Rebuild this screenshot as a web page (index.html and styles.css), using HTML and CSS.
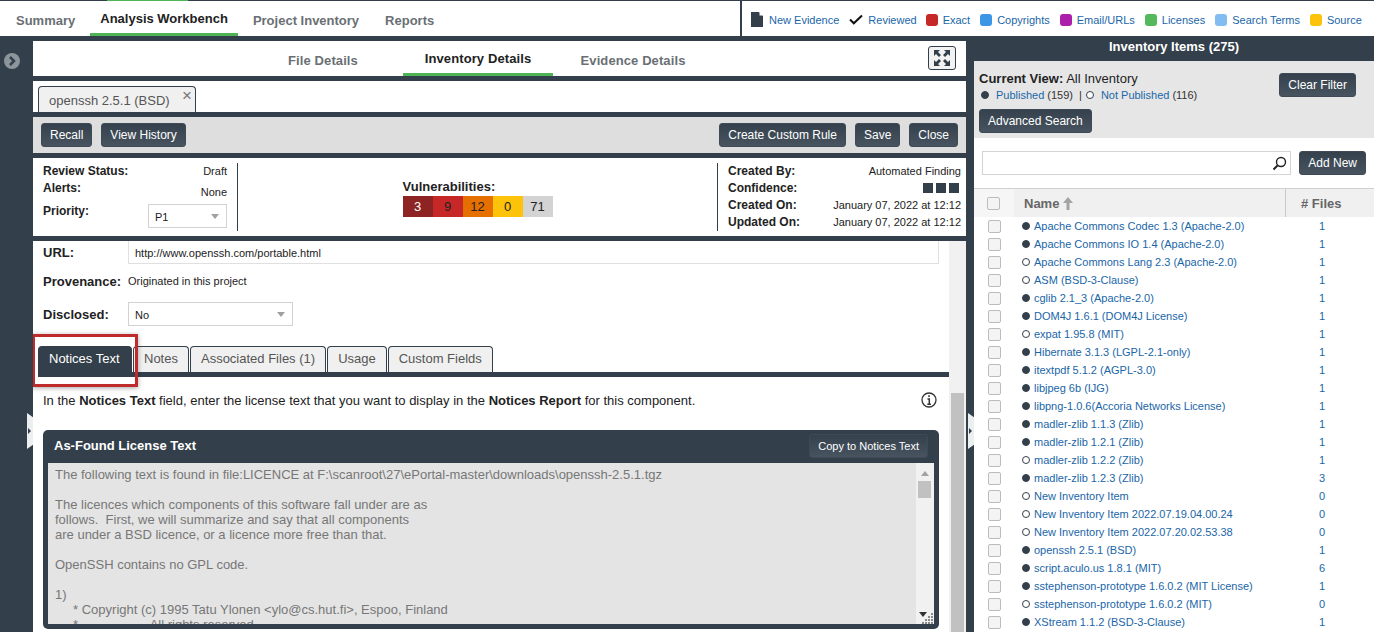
FILE: index.html
```html
<!DOCTYPE html>
<html lang="en">
<head>
    <meta charset="UTF-8">
    <meta name="viewport" content="width=device-width, initial-scale=1.0">
    <title>Analysis Workbench</title>
    <link rel="stylesheet" href="styles.css">
</head>
<body>
    <header class="topbar">
        <nav class="main-nav">
            <a class="nav-item">Summary</a>
            <a class="nav-item active">Analysis Workbench</a>
            <a class="nav-item">Project Inventory</a>
            <a class="nav-item">Reports</a>
        </nav>
        <div class="legend">
            <span class="legend-item">
                <svg class="legend-icon" width="12" height="15" viewBox="0 0 12 15"><path d="M0 0h8l4 4v11H0z" fill="#333f4a"/><path d="M8.500 0l3.500 3.500H8.500z" fill="#fff"/></svg>
                New Evidence
            </span>
            <span class="legend-item">
                <svg class="legend-icon" width="14" height="11" viewBox="0 0 14 11"><path d="M1 5.500l3.800 3.800L13 1.500" fill="none" stroke="#111" stroke-width="2"/></svg>
                Reviewed
            </span>
            <span class="legend-item"><i class="swatch red"></i>Exact</span>
            <span class="legend-item"><i class="swatch blue"></i>Copyrights</span>
            <span class="legend-item"><i class="swatch purple"></i>Email/URLs</span>
            <span class="legend-item"><i class="swatch green"></i>Licenses</span>
            <span class="legend-item"><i class="swatch sky"></i>Search Terms</span>
            <span class="legend-item"><i class="swatch yellow"></i>Source</span>
        </div>
    </header>

    <div class="workspace">
        <aside class="rail">
            <svg class="rail-toggle" width="16" height="16" viewBox="0 0 16 16"><circle cx="8" cy="8" r="8" fill="#8d959c"/><path d="M6 4l4 4-4 4" fill="none" stroke="#333f4a" stroke-width="2.500"/></svg>
        </aside>

        <main class="center">
            <div class="panel detail-tabs">
                <a class="detail-tab">File Details</a>
                <a class="detail-tab active">Inventory Details</a>
                <a class="detail-tab">Evidence Details</a>
                <button class="expand-btn" type="button" aria-label="Expand">
                    <svg width="18" height="18" viewBox="0 0 18 18" fill="#333f4a">
                        <path d="M1 1h6L5 3l3 3-2 2-3-3-2 2zM17 1v6l-2-2-3 3-2-2 3-3-2-2zM1 17v-6l2 2 3-3 2 2-3 3 2 2zM17 17h-6l2-2-3-3 2-2 3 3 2-2z"/>
                    </svg>
                </button>
            </div>

            <div class="panel open-tabs">
                <div class="open-tab">openssh 2.5.1 (BSD)<span class="open-tab-close">&times;</span></div>
            </div>

            <div class="toolbar">
                <button class="btn" type="button">Recall</button>
                <button class="btn" type="button">View History</button>
                <span class="toolbar-space"></span>
                <button class="btn" type="button">Create Custom Rule</button>
                <button class="btn" type="button">Save</button>
                <button class="btn" type="button">Close</button>
            </div>

            <section class="panel summary">
                <div class="summary-left">
                    <div class="kv"><b>Review Status:</b><span>Draft</span></div>
                    <div class="kv kv-alerts"><b>Alerts:</b><span>None</span></div>
                    <div class="kv kv-priority"><b>Priority:</b><div class="select select-small">P1<i class="caret"></i></div></div>
                </div>
                <div class="summary-mid">
                    <div class="vuln-wrap">
                        <b class="vuln-title">Vulnerabilities:</b>
                        <div class="vuln-bar">
                            <span class="v-critical">3</span>
                            <span class="v-high">9</span>
                            <span class="v-medium">12</span>
                            <span class="v-low">0</span>
                            <span class="v-none">71</span>
                        </div>
                    </div>
                </div>
                <div class="summary-right">
                    <div class="kv"><b>Created By:</b><span>Automated Finding</span></div>
                    <div class="kv"><b>Confidence:</b><span class="confidence"><i></i><i></i><i></i></span></div>
                    <div class="kv"><b>Created On:</b><span>January 07, 2022 at 12:12</span></div>
                    <div class="kv"><b>Updated On:</b><span>January 07, 2022 at 12:12</span></div>
                </div>
            </section>

            <section class="panel form-area">
                <div class="form-scroll">
                    <div class="form-row row-url">
                        <label>URL:</label>
                        <div class="text-input">http://www.openssh.com/portable.html</div>
                    </div>
                    <div class="form-row row-prov">
                        <label>Provenance:</label>
                        <span class="plain">Originated in this project</span>
                    </div>
                    <div class="form-row row-disc">
                        <label>Disclosed:</label>
                        <div class="select select-wide">No<i class="caret"></i></div>
                    </div>

                    <div class="sub-tabs">
                        <a class="sub-tab active">Notices Text</a>
                        <a class="sub-tab">Notes</a>
                        <a class="sub-tab">Associated Files (1)</a>
                        <a class="sub-tab">Usage</a>
                        <a class="sub-tab">Custom Fields</a>
                    </div>

                    <div class="help-row">
                        <p>In the <b>Notices Text</b> field, enter the license text that you want to display in the <b>Notices Report</b> for this component.</p>
                        <svg width="16" height="16" viewBox="0 0 16 16"><circle cx="8" cy="8" r="7" fill="#fff" stroke="#333" stroke-width="1.300"/><path d="M8 3.200v1.800M6.500 7h1.800v5M6.300 12.200h3.600" fill="none" stroke="#333" stroke-width="1.500"/></svg>
                    </div>

                    <div class="found-box">
                        <div class="found-head">
                            <h3>As-Found License Text</h3>
                            <button class="btn btn-copy" type="button">Copy to Notices Text</button>
                        </div>
                        <div class="found-body">
                            <pre class="found-text">The following text is found in file:LICENCE at F:\scanroot\27\ePortal-master\downloads\openssh-2.5.1.tgz

The licences which components of this software fall under are as
follows.  First, we will summarize and say that all components
are under a BSD licence, or a licence more free than that.

OpenSSH contains no GPL code.

1)
     * Copyright (c) 1995 Tatu Ylonen &lt;ylo@cs.hut.fi&gt;, Espoo, Finland
     *                    All rights reserved</pre>
                            <div class="text-scroll">
                                <i class="arrow-up"></i>
                                <i class="text-thumb"></i>
                                <i class="arrow-down"></i>
                                <svg class="grip" width="12" height="12" viewBox="0 0 12 12" fill="#8b8b8b"><path d="M9 1h2v2H9zM6 4h2v2H6zM9 4h2v2H9zM3 7h2v2H3zM6 7h2v2H6zM9 7h2v2H9zM0 10h2v2H0zM3 10h2v2H3zM6 10h2v2H6zM9 10h2v2H9z"/></svg>
                            </div>
                        </div>
                    </div>
                </div>
                <div class="form-scrollbar"><i></i></div>
                <div class="callout"></div>
            </section>
        </main>

        <aside class="inventory">
            <h2 class="inv-title">Inventory Items (275)</h2>
            <div class="inv-filter">
                <div class="inv-filter-top">
                    <div>
                        <div class="current-view"><b>Current View:</b> All Inventory</div>
                        <div class="pub-line">
                            <i class="dot"></i><a>Published</a><span>(159)</span><span class="pub-sep">|</span><i class="dot hollow"></i><a>Not Published</a><span>(116)</span>
                        </div>
                    </div>
                    <button class="btn btn-clear" type="button">Clear Filter</button>
                </div>
                <button class="btn btn-adv" type="button">Advanced Search</button>
            </div>
            <div class="inv-search">
                <div class="search-box">
                    <svg width="15" height="15" viewBox="0 0 15 15"><circle cx="9" cy="6" r="4.500" fill="none" stroke="#222" stroke-width="1.400"/><path d="M5.500 9.500L1.500 13.500" stroke="#222" stroke-width="2"/></svg>
                </div>
                <button class="btn" type="button">Add New</button>
            </div>
            <div class="inv-head">
                <div class="col-check"><i class="check"></i></div>
                <div class="col-name">Name
                    <svg width="10" height="13" viewBox="0 0 10 13"><path d="M5 0l5 6H6.500v7h-3V6H0z" fill="#a3a3a3"/></svg>
                </div>
                <div class="col-files"># Files</div>
            </div>
            <ul class="inv-list">
                <li><i class="check"></i><i class="dot"></i><a>Apache Commons Codec 1.3 (Apache-2.0)</a><span>1</span></li>
                <li><i class="check"></i><i class="dot"></i><a>Apache Commons IO 1.4 (Apache-2.0)</a><span>1</span></li>
                <li><i class="check"></i><i class="dot hollow"></i><a>Apache Commons Lang 2.3 (Apache-2.0)</a><span>1</span></li>
                <li><i class="check"></i><i class="dot hollow"></i><a>ASM (BSD-3-Clause)</a><span>1</span></li>
                <li><i class="check"></i><i class="dot"></i><a>cglib 2.1_3 (Apache-2.0)</a><span>1</span></li>
                <li><i class="check"></i><i class="dot"></i><a>DOM4J 1.6.1 (DOM4J License)</a><span>1</span></li>
                <li><i class="check"></i><i class="dot hollow"></i><a>expat 1.95.8 (MIT)</a><span>1</span></li>
                <li><i class="check"></i><i class="dot"></i><a>Hibernate 3.1.3 (LGPL-2.1-only)</a><span>1</span></li>
                <li><i class="check"></i><i class="dot"></i><a>itextpdf 5.1.2 (AGPL-3.0)</a><span>1</span></li>
                <li><i class="check"></i><i class="dot"></i><a>libjpeg 6b (IJG)</a><span>1</span></li>
                <li><i class="check"></i><i class="dot"></i><a>libpng-1.0.6(Accoria Networks License)</a><span>1</span></li>
                <li><i class="check"></i><i class="dot"></i><a>madler-zlib 1.1.3 (Zlib)</a><span>1</span></li>
                <li><i class="check"></i><i class="dot"></i><a>madler-zlib 1.2.1 (Zlib)</a><span>1</span></li>
                <li><i class="check"></i><i class="dot hollow"></i><a>madler-zlib 1.2.2 (Zlib)</a><span>1</span></li>
                <li><i class="check"></i><i class="dot"></i><a>madler-zlib 1.2.3 (Zlib)</a><span>3</span></li>
                <li><i class="check"></i><i class="dot hollow"></i><a>New Inventory Item</a><span>0</span></li>
                <li><i class="check"></i><i class="dot hollow"></i><a>New Inventory Item 2022.07.19.04.00.24</a><span>0</span></li>
                <li><i class="check"></i><i class="dot hollow"></i><a>New Inventory Item 2022.07.20.02.53.38</a><span>0</span></li>
                <li><i class="check"></i><i class="dot"></i><a>openssh 2.5.1 (BSD)</a><span>1</span></li>
                <li><i class="check"></i><i class="dot"></i><a>script.aculo.us 1.8.1 (MIT)</a><span>6</span></li>
                <li><i class="check"></i><i class="dot"></i><a>sstephenson-prototype 1.6.0.2 (MIT License)</a><span>1</span></li>
                <li><i class="check"></i><i class="dot hollow"></i><a>sstephenson-prototype 1.6.0.2 (MIT)</a><span>0</span></li>
                <li><i class="check"></i><i class="dot"></i><a>XStream 1.1.2 (BSD-3-Clause)</a><span>1</span></li>
            </ul>
        </aside>

        <div class="splitter splitter-left"></div>
        <div class="splitter splitter-right"></div>
    </div>
</body>
</html>
```

FILE: styles.css
```css
* { box-sizing: border-box; }
html, body { height: 100%; }
body { margin: 0; height: 632px; overflow: hidden; font-family: "Liberation Sans", Arial, sans-serif; font-size: 12px; color: #222; background: #333f4a; }
a { color: #1a66a8; }
i { display: block; }

/* top bar */
.topbar { position: relative; display: flex; height: 36px; background: #fff; border-top: 1px solid #333f4a; }
.topbar::before { content: ""; position: absolute; left: 107px; top: -1px; width: 81px; height: 1px; background: #4fb455; }
.main-nav { display: flex; width: 740px; padding-left: 2px; }
.nav-item { padding: 12px 14px 0; font-size: 13px; font-weight: bold; color: #6a6f74; }
.nav-item:first-child { padding-right: 15px; }
.nav-item:nth-child(3) { margin-left: 1px; }
.nav-item:nth-child(4) { margin-left: -2px; }
.nav-item.active { padding: 10px 10px 0; color: #222; border-bottom: 3px solid #4fb455; }
.legend { display: flex; flex: 1; align-items: center; padding: 2px 0 0 9px; gap: 10px; border-left: 2px solid #333f4a; font-size: 11px; color: #1a66a8; }
.legend-item { display: flex; align-items: center; gap: 5px; white-space: nowrap; }
.legend-item:first-child { gap: 6px; }
.legend-item:nth-child(3) { margin-left: -1px; }
.swatch { width: 12px; height: 12px; border-radius: 3px; }
.swatch.red { background: #c62828; }
.swatch.blue { background: #3d95e6; }
.swatch.purple { background: #ab1fab; }
.swatch.green { background: #53b95b; }
.swatch.sky { background: #82bdf2; }
.swatch.yellow { background: #fdc30a; }

/* page columns */
.workspace { position: relative; display: flex; height: 596px; }
.rail { width: 33px; padding: 17px 0 0 4px; flex: none; }
.rail-toggle { display: block; }
.center { display: flex; flex-direction: column; width: 933px; padding-top: 5px; gap: 5px; flex: none; }
.panel { background: #fff; }
.splitter { position: absolute; top: 377px; width: 6px; height: 36px; background: #eceff0; clip-path: polygon(0 0, 100% 12%, 100% 88%, 0 100%); }
.splitter::after { content: ""; position: absolute; left: 1px; top: 15px; border-left: 3px solid #333f4a; border-top: 3px solid transparent; border-bottom: 3px solid transparent; }
.splitter-left { left: 27px; }
.splitter-right { left: 968px; }

/* detail tabs */
.detail-tabs { position: relative; display: flex; gap: 5px; height: 35px; flex: none; padding-left: 215px; }
.detail-tab { width: 150px; padding-top: 12px; text-align: center; font-size: 13px; font-weight: bold; letter-spacing: 0.1px; color: #6a6f74; }
.detail-tab.active { padding-top: 10px; color: #222; border-bottom: 3px solid #4fb455; }
.expand-btn { position: absolute; right: 10px; top: 5px; display: flex; align-items: center; justify-content: center; width: 28px; height: 24px; padding: 0; background: #f2f2f2; border: 1px solid #333f4a; border-radius: 3px; }

/* open item tab */
.open-tabs { display: flex; align-items: flex-end; height: 31px; padding-left: 5px; flex: none; }
.open-tab { position: relative; width: 158px; height: 26px; padding: 6px 0 0 10px; font-size: 13px; color: #555; background: #f0f0f0; border: 1px solid #333f4a; border-bottom: none; border-radius: 4px 4px 0 0; }
.open-tab-close { position: absolute; right: 3px; top: 0; font-size: 17px; line-height: 18px; color: #777; }

/* toolbar and buttons */
.toolbar { display: flex; align-items: center; gap: 9px; height: 36px; padding: 0 8px; background: #dedede; flex: none; }
.toolbar-space { flex: 1; }
.btn { height: 24px; padding: 0 8px; font: 12px "Liberation Sans", Arial, sans-serif; color: #fff; background: linear-gradient(#35424e, #47545f); border: 1px solid #3e4a55; border-radius: 3px; white-space: nowrap; }

/* summary strip */
.summary { display: flex; height: 78px; padding: 5px 0; flex: none; }
.summary-left { width: 205px; padding: 0 10px; border-right: 1px solid #333f4a; }
.summary-mid { display: flex; flex: 1; justify-content: center; padding-top: 16px; }
.summary-right { width: 249px; padding: 0 5px 0 10px; border-left: 1px solid #333f4a; }
.kv { display: flex; justify-content: space-between; align-items: center; height: 17px; font-size: 11px; color: #222; }
.kv:first-child { margin-top: -1px; }
.kv b { font-size: 12px; }
.kv-alerts span { position: relative; top: 4px; }
.kv-priority { height: 24px; margin-top: 8px; }
.kv-priority b { margin-bottom: 10px; }
.select { position: relative; border: 1px solid #d2d2d2; background: #fff; font-size: 11px; color: #222; }
.select-small { width: 79px; height: 24px; padding: 6px 0 0 6px; }
.select-wide { width: 165px; height: 24px; padding: 6px 0 0 6px; }
.caret { position: absolute; right: 7px; top: 9px; border-top: 5px solid #a0a0a0; border-left: 4px solid transparent; border-right: 4px solid transparent; }
.vuln-title { display: block; font-size: 13px; height: 17px; }
.vuln-bar { display: flex; height: 21px; }
.vuln-bar span { width: 30px; line-height: 21px; text-align: center; font-size: 13px; color: #222; }
.vuln-bar .v-critical { background: #8e2323; color: #fff; }
.vuln-bar .v-high { background: #c62828; }
.vuln-bar .v-medium { background: #e57000; }
.vuln-bar .v-low { background: #fdc30a; }
.vuln-bar .v-none { background: #d3d3d3; }
.confidence { display: flex; gap: 3px; margin-right: 2px; }
.confidence i { width: 10px; height: 10px; background: #333f4a; }

/* form area */
.form-area { position: relative; display: flex; flex: 1; min-height: 0; overflow: hidden; }
.form-scroll { flex: 1; padding: 0 10px; min-width: 0; }
.form-scrollbar { width: 17px; background: #f1f1f1; padding: 152px 2px 0; }
.form-scrollbar i { height: 100%; background: #c1c1c1; }
.form-row { display: flex; align-items: center; }
.form-row label { width: 85px; font-size: 13px; font-weight: bold; color: #222; flex: none; }
.row-url { height: 23px; }
.text-input { flex: 1; height: 23px; padding: 6px 6px 0; font-size: 11px; background: #fff; border: 1px solid #e0e0e0; border-top: none; }
.row-prov { height: 34px; }
.plain { font-size: 11px; }
.row-disc { height: 24px; margin-top: 4px; }
.sub-tabs { display: flex; gap: 1px; height: 31px; margin: 20px -10px 0 -5px; border-bottom: 5px solid #333f4a; }
.sub-tab { height: 26px; padding: 4px 10px 0; font-size: 13px; color: #555; white-space: nowrap; background: #f0f0f0; border: 1px solid #333f4a; border-bottom: none; border-radius: 4px 4px 0 0; }
.sub-tab.active { width: 94px; color: #fff; background: #333f4a; }
.help-row { display: flex; justify-content: space-between; align-items: center; height: 46px; margin-right: 2px; }
.help-row p { margin: 0; font-size: 13px; color: #222; }
.found-box { margin-top: 7px; background: #333f4a; border-radius: 5px; padding: 0 5px 5px; height: 199px; }
.found-head { display: flex; justify-content: space-between; align-items: center; height: 31px; margin-bottom: 2px; padding-left: 6px; padding-right: 6px; }
.found-head h3 { margin: 0; font-size: 13px; font-weight: bold; color: #fff; }
.btn-copy { font-size: 11px; }
.found-body { display: flex; height: 161px; background: #e4e4e4; }
.found-text { flex: 1; margin: 0; padding: 4px 7px; font: 13px/15px "Liberation Sans", Arial, sans-serif; color: #777; overflow: hidden; }
.text-scroll { position: relative; width: 18px; background: #f1f1f1; }
.arrow-up { position: absolute; left: 5px; top: 8px; border-bottom: 5px solid #a3a3a3; border-left: 4px solid transparent; border-right: 4px solid transparent; }
.text-thumb { position: absolute; left: 2px; top: 18px; width: 13px; height: 17px; background: #c1c1c1; }
.arrow-down { position: absolute; left: 3px; bottom: 7px; border-top: 5px solid #333; border-left: 4px solid transparent; border-right: 4px solid transparent; }
.grip { position: absolute; right: 0; bottom: 0; }

/* red highlight on the first sub tab */
.callout { position: absolute; left: -1px; top: 93px; width: 106px; height: 53px; border: 3px solid #bf2a2a; box-shadow: 0 1px 5px rgba(0,0,0,0.35); }

/* inventory */
.inventory { width: 400px; margin-left: 8px; flex: none; display: flex; flex-direction: column; }
.inv-title { margin: 0; height: 25px; padding-top: 3px; text-align: center; font-size: 13px; font-weight: bold; color: #fff; }
.inv-filter { height: 77px; padding: 10px 5px 0; background: #e6e6e6; }
.inv-filter-top { display: flex; justify-content: space-between; height: 38px; padding-right: 13px; }
.btn-clear { margin-top: 2px; }
.current-view { font-size: 13px; color: #222; }
.pub-line { display: flex; align-items: center; height: 14px; margin-top: 2px; padding-left: 2px; font-size: 11px; color: #333; }
.pub-line a { margin: 0 3px 0 7px; }
.pub-sep { margin: 0 4px 0 6px; }
.inv-search { display: flex; align-items: center; height: 50px; padding: 0 8px; gap: 8px; background: #fff; }
.search-box { display: flex; align-items: center; justify-content: flex-end; flex: 1; height: 24px; padding-right: 3px; border: 1px solid #d4d4d4; }
.inv-head { display: flex; height: 29px; background: #f0f0f0; border-top: 1px solid #d0d0d0; font-size: 13px; font-weight: bold; color: #666; flex: none; }
.col-check { width: 40px; padding: 8px 0 0 13px; background: #f6f6f6; }
.col-name { display: flex; align-items: center; gap: 4px; width: 272px; padding-left: 10px; border-right: 1px solid #c8c8c8; }
.col-files { flex: 1; padding: 7px 0 0 15px; }
.check { width: 13px; height: 13px; background: #f4f4f4; border: 1px solid #bcbcbc; border-radius: 2px; }
.inv-list { margin: 0; padding: 0; list-style: none; background: #fff; flex: 1; overflow: hidden; font-size: 11px; }
.inv-list li { display: flex; align-items: center; height: 18px; padding-left: 14px; }
.inv-list .dot { margin-left: 21px; }
.inv-list a { width: 285px; margin-left: 4px; white-space: nowrap; }
.inv-list span { width: 10px; color: #1a66a8; }
.dot { width: 8px; height: 8px; border-radius: 50%; background: #333f4a; border: 1px solid #333f4a; flex: none; }
.dot.hollow { background: #fff; }
```
